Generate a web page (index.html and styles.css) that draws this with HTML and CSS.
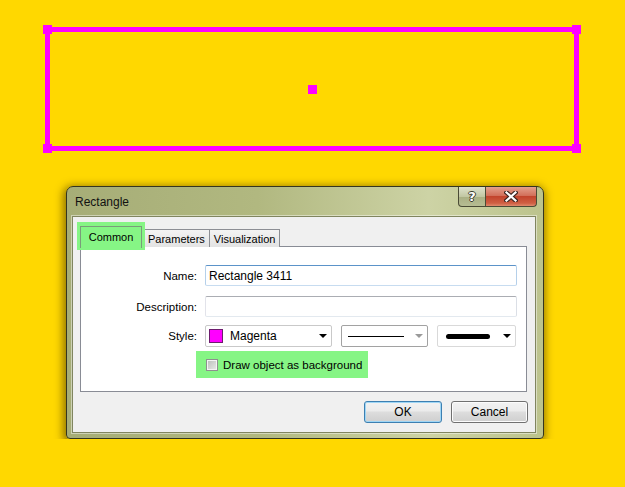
FILE: index.html
```html
<!DOCTYPE html>
<html lang="en">
<head>
    <meta charset="UTF-8">
    <meta name="viewport" content="width=device-width, initial-scale=1.0">
    <title>Rectangle</title>
    <link rel="stylesheet" href="styles.css">
</head>
<body>

    <!-- chart area with the selected rectangle object -->
    <div class="chart">
        <div class="shape">
            <span class="handle tl"></span>
            <span class="handle tr"></span>
            <span class="handle bl"></span>
            <span class="handle br"></span>
            <span class="handle mid"></span>
        </div>
    </div>

    <div class="dialog">
        <div class="titlebar">
            <span class="title">Rectangle</span>
            <div class="caption-btns">
                <button class="cap help">?</button>
                <button class="cap close">
                    <svg width="14" height="11" viewBox="0 0 14 11">
                        <path d="M2.5 1.5 L11.5 9.5 M11.5 1.5 L2.5 9.5" stroke="#3b2520" stroke-width="4.4" stroke-linecap="square" fill="none"/>
                        <path d="M2.5 1.5 L11.5 9.5 M11.5 1.5 L2.5 9.5" stroke="#ffffff" stroke-width="2.2" stroke-linecap="square" fill="none"/>
                    </svg>
                </button>
            </div>
        </div>

        <div class="client">
            <div class="tabs">
                <div class="tab active">Common</div>
                <div class="tab">Parameters</div>
                <div class="tab">Visualization</div>
            </div>

            <div class="panel">
                <div class="row r-name">
                    <label for="name">Name:</label>
                    <input type="text" id="name" class="txt focus" value="Rectangle 3411">
                </div>
                <div class="row r-desc">
                    <label for="desc">Description:</label>
                    <input type="text" id="desc" class="txt">
                </div>
                <div class="row r-style">
                    <label>Style:</label>
                    <div class="combos">
                        <div class="combo c-color">
                            <span class="swatch"></span>
                            <span class="combo-text">Magenta</span>
                            <span class="arrow"></span>
                        </div>
                        <div class="combo c-line">
                            <span class="line-thin"></span>
                            <span class="arrow grey"></span>
                        </div>
                        <div class="combo c-width">
                            <span class="line-thick"></span>
                            <span class="arrow"></span>
                        </div>
                    </div>
                </div>
                <div class="row r-check">
                    <span class="spacer"></span>
                    <div class="check-wrap">
                        <span class="checkbox"></span>
                        <span>Draw object as background</span>
                    </div>
                </div>
            </div>

            <div class="actions">
                <button class="btn default">OK</button>
                <button class="btn">Cancel</button>
            </div>
        </div>
    </div>

</body>
</html>
```

FILE: styles.css
```css
body {
    margin: 0;
    background-color: #ffd800;
    font-family: "Liberation Sans", Arial, sans-serif;
    font-size: 11.5px;
    color: #000;
}

/* chart with the rectangle object */
.chart {
    height: 186px;
    padding-top: 27px;
    box-sizing: border-box;
}
.shape {
    position: relative;
    margin-left: 45px;
    width: 534px;
    height: 124px;
    border: 5px solid #ff00ff;
    box-sizing: border-box;
}
.handle {
    position: absolute;
    width: 9px;
    height: 9px;
    background-color: #ff00ff;
}
.handle.tl { left: -7px; top: -7px; }
.handle.tr { right: -7px; top: -7px; }
.handle.bl { left: -7px; bottom: -7px; }
.handle.br { right: -7px; bottom: -7px; }
.handle.mid { left: calc(50% - 4.5px); top: calc(50% - 4.5px); }

/* dialog window */
.dialog {
    margin-left: 66px;
    width: 478px;
    height: 253px;
    box-sizing: border-box;
    border: 1px solid #34351f;
    border-radius: 7px 7px 4px 4px;
    padding: 0 7px 5px 5px;
    background: linear-gradient(90deg, #a6ad77 0%, #b1b880 40%, #cdd3a5 76%, #bcc38d 100%);
    box-shadow: -1px 2px 9px 2px rgba(70, 50, 0, 0.6);
}
.titlebar {
    height: 29px;
    display: flex;
    justify-content: space-between;
    align-items: flex-start;
}
.title {
    align-self: center;
    padding-left: 3px;
    font-size: 12px;
    color: #111;
}
.caption-btns {
    display: flex;
    margin-right: -1px;
}
.cap {
    height: 20px;
    margin: 0;
    padding: 0;
    border: 1px solid #4a4b35;
    border-top: none;
    display: flex;
    align-items: center;
    justify-content: center;
}
.cap.help {
    width: 28px;
    border-radius: 0 0 0 4px;
    background: linear-gradient(#dfe2cc, #c2c7a3 50%, #a9af83 51%, #b7bd93);
    font-family: "DejaVu Sans", sans-serif;
    font-weight: bold;
    font-size: 13px;
    color: #fff;
    text-shadow: 1px 0 0 #3a3b2c, -1px 0 0 #3a3b2c, 0 1px 0 #3a3b2c, 0 -1px 0 #3a3b2c;
}
.cap.close {
    width: 51px;
    border-left: none;
    border-radius: 0 0 4px 0;
    background: linear-gradient(#e4a08d, #d2705a 45%, #c2442c 50%, #cf5f43 85%, #e08a6c);
}

.client {
    height: 217px;
    box-sizing: border-box;
    border: 1px solid #80855f;
    background-color: #f0f0f0;
    box-shadow: 0 0 0 1px rgba(255, 255, 255, 0.45);
}

/* tabs */
.tabs {
    height: 29px;
    display: flex;
    align-items: flex-end;
    padding-left: 7px;
}
.tab {
    height: 17px;
    padding: 0 4px;
    border: 1px solid #8c8e94;
    border-bottom: none;
    background: linear-gradient(#f3f3f3, #e3e3e3);
    font-size: 11px;
    line-height: 18px;
    margin-bottom: -1px;
}
.tab + .tab {
    margin-left: -1px;
}
.tab.active {
    position: relative;
    z-index: 1;
    width: 60px;
    height: 21px;
    padding: 0;
    text-align: center;
    line-height: 20px;
    margin-bottom: -2px;
    background: #86f585;
    box-shadow: 0 -1px 0 3px #86f585;
    border-color: #7a9c7a;
}
.tab.active + .tab {
    margin-left: 1px;
}

/* tab page */
.panel {
    margin-left: 7px;
    width: 447px;
    height: 146px;
    box-sizing: border-box;
    border: 1px solid #898c95;
    background-color: #fff;
    padding-top: 18px;
}
.row {
    display: flex;
    align-items: center;
    gap: 8px;
}
.row label, .row .spacer {
    width: 116px;
    text-align: right;
    flex-shrink: 0;
}
.r-name { height: 21px; margin-bottom: 10px; }
.r-desc { height: 21px; margin-bottom: 8px; }
.r-style { height: 22px; margin-bottom: 4px; }
.r-check { height: 27px; }

.txt {
    width: 312px;
    height: 21px;
    box-sizing: border-box;
    margin: 0;
    padding: 0 3px;
    font-family: inherit;
    font-size: 12px;
    border: 1px solid;
    border-color: #abadb3 #dbdfe6 #e3e9ef #e2e3ea;
    border-radius: 2px;
    outline: none;
}
.txt.focus {
    border-color: #5b93c9 #b5d0ea #c7dcf0 #b5d0ea;
}

.combos {
    display: flex;
    gap: 9px;
}
.combo {
    height: 22px;
    box-sizing: border-box;
    border: 1px solid #c9c9c9;
    border-radius: 2px;
    background-color: #fff;
    display: flex;
    align-items: center;
    padding: 0 4px 0 3px;
}
.c-color { width: 127px; }
.c-line { width: 87px; border-color: #a2a2a2; padding-left: 6px; }
.c-width { width: 79px; border-color: #d9d9d9; padding-left: 8px; }
.swatch {
    width: 14px;
    height: 14px;
    box-sizing: border-box;
    background-color: #ff00ff;
    border: 1px solid #6e1c6e;
}
.combo-text {
    flex: 1;
    margin-left: 7px;
    font-size: 12px;
}
.line-thin {
    width: 56px;
    height: 1px;
    background-color: #000;
    margin-right: auto;
}
.line-thick {
    width: 44px;
    height: 5px;
    border-radius: 3px;
    background-color: #000;
    margin-right: auto;
}
.arrow {
    width: 0;
    height: 0;
    border-left: 4px solid transparent;
    border-right: 4px solid transparent;
    border-top: 4px solid #000;
    margin-left: auto;
}
.arrow.grey {
    border-top-color: #9a9a9a;
}

.check-wrap {
    margin-left: -9px;
    width: 172px;
    height: 27px;
    background-color: #86f585;
    display: flex;
    align-items: center;
    padding-left: 10px;
    box-sizing: border-box;
    gap: 5px;
    font-size: 11.5px;
}
.checkbox {
    width: 12px;
    height: 12px;
    box-sizing: border-box;
    border: 1px solid #8e8f8f;
    background: linear-gradient(135deg, #b9bdb9, #e9ece9);
    box-shadow: inset 0 0 0 1px #f4f4f4;
}

/* OK / Cancel */
.actions {
    display: flex;
    justify-content: flex-end;
    gap: 9px;
    padding: 9px 7px 0 0;
}
.btn {
    width: 77px;
    height: 22px;
    margin: 0;
    padding: 0;
    font-family: inherit;
    font-size: 12px;
    color: #000;
    border: 1px solid #707070;
    border-radius: 3px;
    background: linear-gradient(#f2f2f2, #ebebeb 45%, #dddddd 50%, #cfcfcf);
    box-shadow: inset 0 0 0 1px #fcfcfc;
}
.btn.default {
    width: 78px;
    border-color: #3c7fb1;
    box-shadow: inset 0 0 0 1px #9fd6f5;
}
```
